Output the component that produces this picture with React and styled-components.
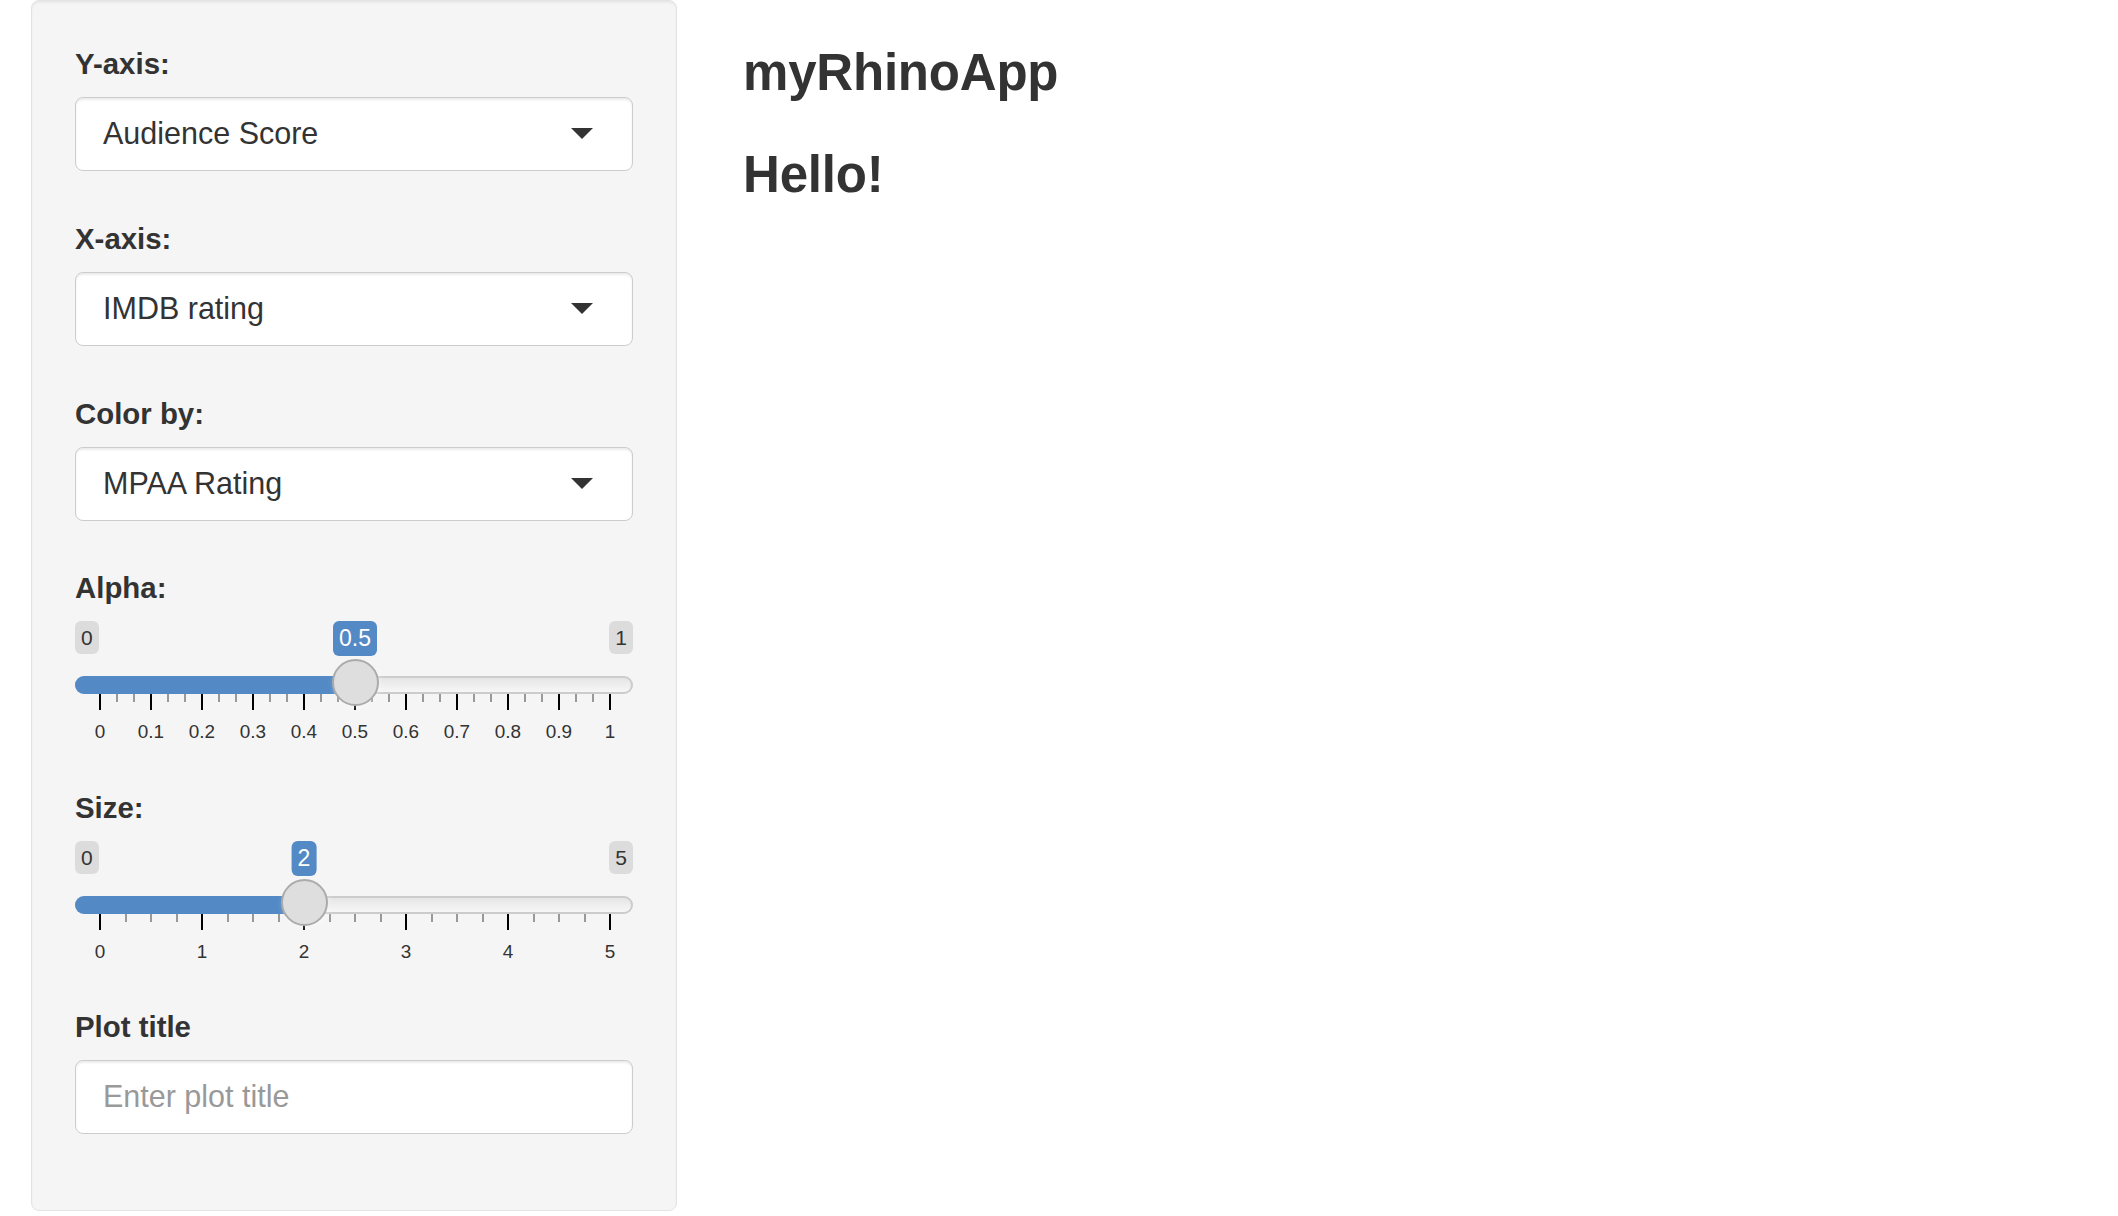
import React from "react"
import styled, { createGlobalStyle } from "styled-components"

const GlobalStyle = createGlobalStyle`
    html, body {
        margin: 0;
        padding: 0;
        background: #fff;
    }
    body {
        font-family: "Liberation Sans", Arial, Helvetica, sans-serif;
        color: #333;
    }
    * {
        box-sizing: border-box;
    }
`

const Page = styled.div`
    display: flex;
    align-items: flex-start;
    padding-left: 31px;
`

const Sidebar = styled.form`
    width: 646px;
    flex-shrink: 0;
    padding: 42px 43px 43px;
    background: #f5f5f5;
    border: 1px solid #e3e3e3;
    border-radius: 8px;
    box-shadow: inset 0 2px 2px rgba(0, 0, 0, 0.05);
`

const Main = styled.main`
    margin-left: 66px;
    padding-top: 45px;
`

const Heading = styled.h3`
    margin: 0 0 ${p => p.$mb || 0}px;
    font-size: 51px;
    line-height: 56px;
    font-weight: 700;
    color: #333;
    letter-spacing: -0.2px;
`

const Group = styled.div`
    display: flex;
    flex-direction: column;
    margin-bottom: ${p => p.$mb}px;
`

const Label = styled.label`
    display: block;
    font-size: 29.4px;
    line-height: 42px;
    font-weight: 700;
    margin-bottom: 12px;
    color: #333;
`

const SelectBox = styled.div`
    display: flex;
    align-items: center;
    justify-content: space-between;
    height: 74px;
    padding: 0 39px 1px 27px;
    background: #fff;
    border: 1px solid #ccc;
    border-radius: 8px;
    box-shadow: inset 0 2px 2px rgba(0, 0, 0, 0.075);
    font-size: 30.5px;
    color: #333;
`

const Caret = styled.span`
    width: 0;
    height: 0;
    border-left: 11px solid transparent;
    border-right: 11px solid transparent;
    border-top: 11px solid #333;
`

const TextInput = styled.input`
    width: 100%;
    height: 74px;
    padding: 0 27px 2px;
    background: #fff;
    border: 1px solid #ccc;
    border-radius: 8px;
    box-shadow: inset 0 2px 2px rgba(0, 0, 0, 0.075);
    font-family: "Liberation Sans", Arial, sans-serif;
    font-size: 30.5px;
    color: #333;
    outline: none;
    &::placeholder {
        color: #999;
    }
`

const SliderWrap = styled.div`
    position: relative;
    height: 120px;
`

const EdgeTag = styled.span`
    position: absolute;
    top: 0;
    ${p => (p.$right ? "right: 0;" : "left: 0;")}
    padding: 2px 6px;
    font-size: 21px;
    line-height: 29px;
    color: #333;
    background: rgba(0, 0, 0, 0.1);
    border-radius: 6px;
`

const ValueTag = styled.span`
    position: absolute;
    top: 0;
    transform: translateX(-50%);
    padding: 2px 6px;
    font-size: 23px;
    line-height: 31px;
    color: #fff;
    background: #538ac6;
    border-radius: 6px;
    white-space: nowrap;
`

const Line = styled.div`
    position: absolute;
    top: 55px;
    left: 0;
    right: 0;
    height: 18px;
    border: 2px solid #ccc;
    border-radius: 18px;
    background: linear-gradient(to bottom, #ddd -50%, #fff 150%);
`

const Bar = styled.div`
    position: absolute;
    top: 55px;
    left: 0;
    height: 18px;
    background: #538ac6;
    border-radius: 18px 0 0 18px;
`

const Handle = styled.div`
    position: absolute;
    top: 38px;
    width: 47px;
    height: 47px;
    margin-left: -23.5px;
    background: #dedede;
    border: 2px solid #ababab;
    border-radius: 50%;
    box-shadow: 2px 2px 6px rgba(255, 255, 255, 0.3);
    z-index: 2;
`

const Tick = styled.span`
    position: absolute;
    top: 73px;
    width: 2px;
    margin-left: -1px;
    height: ${p => (p.$small ? 8 : 16)}px;
    background: ${p => (p.$small ? "#999" : "#000")};
`

const TickText = styled.span`
    position: absolute;
    top: 101px;
    transform: translateX(-50%);
    font-size: 18.9px;
    line-height: 19px;
    color: #333;
    white-space: nowrap;
`

const GRID_START = 25
const GRID_SPAN = 510

const RangeSlider = ({ min, max, value, labels, sub }) => {
    const pos = v => GRID_START + ((v - min) / (max - min)) * GRID_SPAN
    const majors = labels.length - 1
    const ticks = []
    for (let i = 0; i <= majors * sub; i++) {
        ticks.push({ x: GRID_START + (i / (majors * sub)) * GRID_SPAN, small: i % sub !== 0 })
    }
    const hx = pos(value)
    return (
        <SliderWrap>
            <EdgeTag>{min}</EdgeTag>
            <EdgeTag $right>{max}</EdgeTag>
            <ValueTag style={{ left: hx }}>{value}</ValueTag>
            <Line />
            <Bar style={{ width: hx }} />
            {ticks.map((t, i) => (
                <Tick key={i} $small={t.small} style={{ left: t.x }} />
            ))}
            {labels.map((l, i) => (
                <TickText key={l} style={{ left: GRID_START + (i / majors) * GRID_SPAN }}>{l}</TickText>
            ))}
            <Handle style={{ left: hx }} />
        </SliderWrap>
    )
}

const Select = ({ value }) => (
    <SelectBox>
        <span>{value}</span>
        <Caret />
    </SelectBox>
)

const App = () => {
    return (
        <Page>
            <GlobalStyle />
            <Sidebar>
                <Group $mb={47}>
                    <Label>Y-axis:</Label>
                    <Select value="Audience Score" />
                </Group>
                <Group $mb={47}>
                    <Label>X-axis:</Label>
                    <Select value="IMDB rating" />
                </Group>
                <Group $mb={46}>
                    <Label>Color by:</Label>
                    <Select value="MPAA Rating" />
                </Group>
                <Group $mb={46}>
                    <Label>Alpha:</Label>
                    <RangeSlider
                        min={0}
                        max={1}
                        value={0.5}
                        sub={3}
                        labels={["0", "0.1", "0.2", "0.3", "0.4", "0.5", "0.6", "0.7", "0.8", "0.9", "1"]}
                    />
                </Group>
                <Group $mb={45}>
                    <Label>Size:</Label>
                    <RangeSlider min={0} max={5} value={2} sub={4} labels={["0", "1", "2", "3", "4", "5"]} />
                </Group>
                <Group $mb={33}>
                    <Label>Plot title</Label>
                    <TextInput placeholder="Enter plot title" />
                </Group>
            </Sidebar>
            <Main>
                <Heading $mb={46}>myRhinoApp</Heading>
                <Heading>Hello!</Heading>
            </Main>
        </Page>
    )
}

export default App
